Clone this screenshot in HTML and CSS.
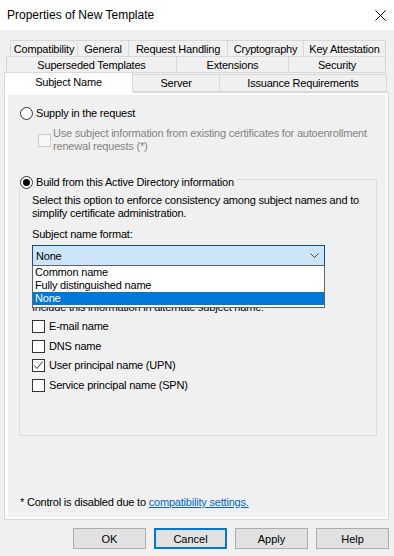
FILE: index.html
```html
<!DOCTYPE html>
<html lang="en">

<head>
    <meta charset="UTF-8">
    <meta name="viewport" content="width=device-width, initial-scale=1.0">
    <title>Properties of New Template</title>
    <link rel="stylesheet" href="styles.css">
</head>

<body>
    <div class="window">
        <div class="titlebar">
            <span class="title">Properties of New Template</span>
            <svg class="close" width="11" height="11" viewBox="0 0 11 11">
                <path d="M0.5 0.5 L10.5 10.5 M10.5 0.5 L0.5 10.5" stroke="#000" stroke-width="1" fill="none"/>
            </svg>
        </div>

        <div class="tabs">
            <div class="tab-row row1">
                <div class="tab" style="width: 68px">Compatibility</div>
                <div class="tab" style="width: 52px">General</div>
                <div class="tab" style="width: 100px">Request Handling</div>
                <div class="tab" style="width: 77px">Cryptography</div>
                <div class="tab" style="width: 83px">Key Attestation</div>
            </div>
            <div class="tab-row row2">
                <div class="tab" style="width: 171px">Superseded Templates</div>
                <div class="tab" style="width: 113px">Extensions</div>
                <div class="tab" style="width: 98px">Security</div>
            </div>
            <div class="tab-row row3">
                <div class="tab selected" style="width: 129px">Subject Name</div>
                <div class="tab" style="width: 88px">Server</div>
                <div class="tab" style="width: 168px">Issuance Requirements</div>
            </div>
        </div>

        <div class="panel">
            <div class="page">
                <label class="option first">
                    <span class="radio"></span>
                    <span>Supply in the request</span>
                </label>

                <label class="option multi disabled">
                    <span class="check"></span>
                    <span>Use subject information from existing certificates for autoenrollment<br>renewal requests (*)</span>
                </label>

                <div class="group">
                    <label class="option group-head">
                        <span class="radio checked"></span>
                        <span>Build from this Active Directory information</span>
                    </label>

                    <p class="desc">Select this option to enforce consistency among subject names and to<br>simplify certificate administration.</p>

                    <p class="field-label">Subject name format:</p>
                    <div class="combo">
                        <span>None</span>
                        <svg class="chevron" width="9" height="5" viewBox="0 0 9 5">
                            <path d="M0.5 0.5 L4.5 4.5 L8.5 0.5" stroke="#444" stroke-width="1" fill="none"/>
                        </svg>
                        <ul class="combo-list">
                            <li>Common name</li>
                            <li>Fully distinguished name</li>
                            <li class="active">None</li>
                        </ul>
                    </div>

                    <p class="field-label include">Include this information in alternate subject name:</p>

                    <label class="option box-row">
                        <span class="check"></span>
                        <span>E-mail name</span>
                    </label>
                    <label class="option box-row">
                        <span class="check"></span>
                        <span>DNS name</span>
                    </label>
                    <label class="option box-row">
                        <span class="check">
                            <svg width="11" height="11" viewBox="0 0 11 11">
                                <path d="M1.5 5.5 L4 8.5 L9.5 1.5" stroke="#333" stroke-width="1" fill="none"/>
                            </svg>
                        </span>
                        <span>User principal name (UPN)</span>
                    </label>
                    <label class="option box-row">
                        <span class="check"></span>
                        <span>Service principal name (SPN)</span>
                    </label>
                </div>

                <p class="footnote">* Control is disabled due to <a href="#">compatibility settings.</a></p>
            </div>
        </div>

        <div class="buttons">
            <button>OK</button>
            <button class="default">Cancel</button>
            <button>Apply</button>
            <button>Help</button>
        </div>
    </div>
</body>

</html>
```

FILE: styles.css
```css
body {
    margin: 0;
    font-family: "Liberation Sans", Arial, sans-serif;
    font-size: 11px;
    letter-spacing: -0.2px;
    color: #000;
    background: #f0f0f0;
}

.window {
    width: 394px;
    height: 556px;
    display: flex;
    flex-direction: column;
}

.titlebar {
    height: 30px;
    background: #fff;
    display: flex;
    align-items: center;
    justify-content: space-between;
    padding: 0 8px 0 7px;
}

.title {
    font-size: 12px;
    letter-spacing: 0;
}

/* tab strip */
.tabs {
    padding-top: 10px;
}

.tab-row {
    display: flex;
    white-space: nowrap;
}

.row1 {
    height: 17px;
    padding-left: 10px;
}

.row2 {
    height: 17px;
    padding-left: 6px;
    margin-top: -1px;
}

.row3 {
    height: 19px;
    padding-left: 4px;
    align-items: flex-end;
    position: relative;
    z-index: 1;
}

.tab {
    box-sizing: border-box;
    border: 1px solid #d9d9d9;
    margin-left: -1px;
    display: flex;
    align-items: center;
    justify-content: center;
    background: #f0f0f0;
    height: 100%;
}

.tab:first-child {
    margin-left: 0;
}

.row3 .tab {
    height: 18px;
}

.row3 .tab.selected {
    height: 21px;
    background: #fff;
    border-bottom-color: #fff;
    margin-bottom: -1px;
    padding-bottom: 2px;
}

/* page panel */
.panel {
    margin: 0 5px 0 4px;
    height: 428px;
    box-sizing: border-box;
    border: 1px solid #d9d9d9;
    background: #fff;
    padding: 2px 2px 2px 3px;
}

.page {
    height: 100%;
    background: #f0f0f0;
    display: flex;
    flex-direction: column;
    padding-left: 12px;
    box-sizing: border-box;
}

.option {
    display: flex;
    align-items: center;
    line-height: 13px;
    white-space: nowrap;
}

.option.first {
    margin-top: 11px;
    height: 14px;
}

.option.multi {
    margin-top: 7px;
    margin-left: 18px;
}

.option.disabled {
    color: #838383;
}

.radio {
    width: 13px;
    height: 13px;
    box-sizing: border-box;
    border: 1px solid #333;
    border-radius: 50%;
    background: #fff;
    margin-right: 3px;
    flex-shrink: 0;
    display: flex;
    align-items: center;
    justify-content: center;
}

.radio.checked::after {
    content: "";
    width: 7px;
    height: 7px;
    border-radius: 50%;
    background: #000;
}

.check {
    width: 13px;
    height: 13px;
    box-sizing: border-box;
    border: 1px solid #333;
    background: #fff;
    margin-right: 4px;
    flex-shrink: 0;
    display: flex;
}

.disabled .check {
    border-color: #cccccc;
    background: #f7f7f7;
    margin-right: 2px;
}

/* group box */
.group {
    margin: 26px 8px 0 -1px;
    width: 358px;
    height: 257px;
    box-sizing: border-box;
    border: 1px solid #dcdcdc;
    padding-left: 12px;
}

.group-head {
    margin: -5px 0 0 -13px;
    padding-left: 1px;
    padding-right: 3px;
    height: 14px;
    background: #f0f0f0;
    width: fit-content;
}

.desc,
.field-label {
    margin: 0;
    line-height: 13px;
}

.desc {
    margin-top: 5px;
}

.field-label {
    margin-top: 8px;
}

.field-label.include {
    margin-top: 35px;
}

.combo {
    position: relative;
    margin-top: 4px;
    width: 293px;
    height: 21px;
    box-sizing: border-box;
    border: 1px solid #005499;
    background: #cce4f7;
    display: flex;
    align-items: center;
    justify-content: space-between;
    padding: 0 4px 0 3px;
}

.chevron {
    margin-right: 1px;
}

.combo-list {
    position: absolute;
    top: 19px;
    left: -1px;
    width: 293px;
    margin: 0;
    padding: 0 0 2px;
    list-style: none;
    box-sizing: border-box;
    border: 1px solid #646464;
    background: #fff;
    z-index: 2;
}

.combo-list li {
    height: 13px;
    line-height: 13px;
    padding-left: 2px;
}

.combo-list li.active {
    background: #0078d7;
    color: #fff;
}

.box-row {
    height: 19.5px;
}

.include + .box-row {
    margin-top: 3px;
}

.footnote {
    margin: auto 0 8px 0;
    line-height: 13px;
}

.footnote a {
    color: #0066cc;
}

/* dialog buttons */
.buttons {
    display: flex;
    justify-content: flex-end;
    gap: 8px;
    padding: 8px 5px 0 0;
}

.buttons button {
    width: 73px;
    height: 21px;
    box-sizing: border-box;
    border: 1px solid #adadad;
    background: #e1e1e1;
    font-family: "Liberation Sans", Arial, sans-serif;
    font-size: 11px;
    color: #000;
    padding: 0;
}

.buttons button.default {
    border: 2px solid #0078d7;
}
```
